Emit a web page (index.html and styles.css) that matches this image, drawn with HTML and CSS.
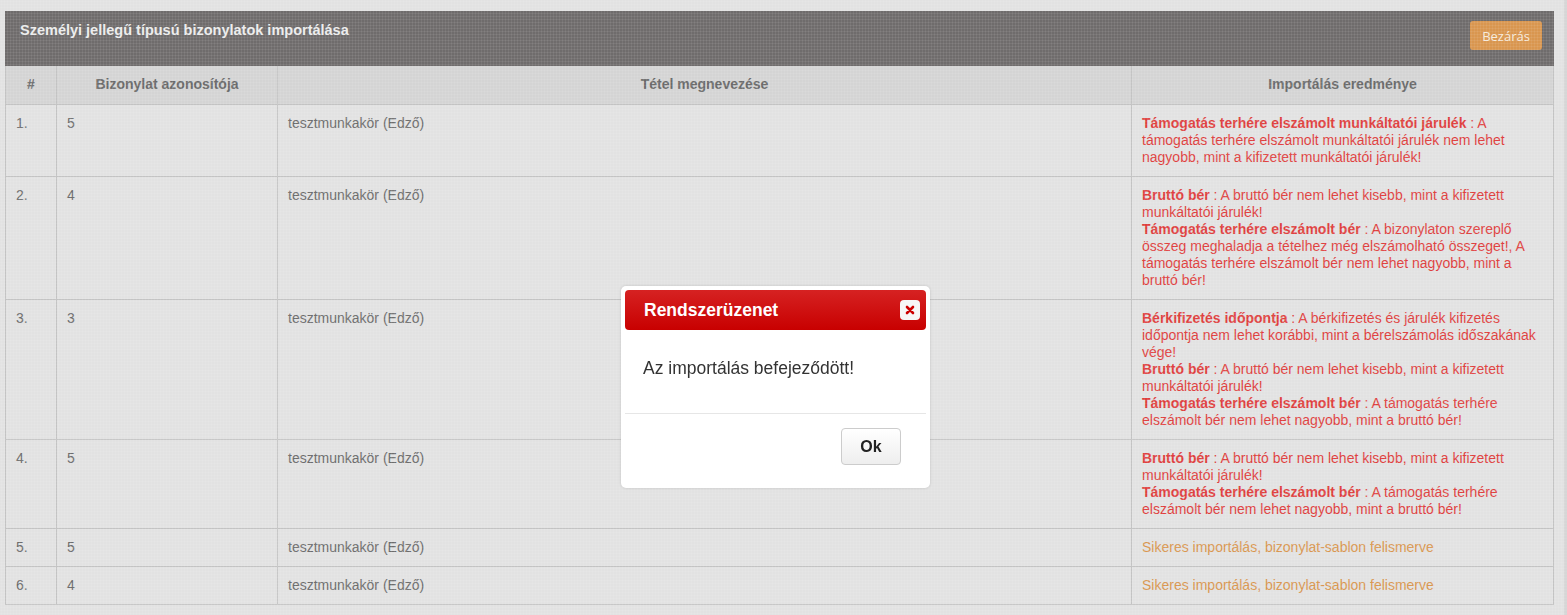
FILE: index.html
```html
<!DOCTYPE html>
<html>
<head>
    <meta charset="utf-8">
    <title>Személyi jellegű típusú bizonylatok importálása</title>
    <link rel="stylesheet" href="styles.css">
</head>
<body>
    <div class="page">
        <div class="content">
            <div class="panel">
                <div class="panel-heading">
                    <span class="panel-title">Személyi jellegű típusú bizonylatok importálása</span>
                    <button class="btn-close">Bezárás</button>
                </div>
                <table class="result-table">
                    <thead>
                        <tr>
                            <th class="col-num">#</th>
                            <th class="col-id">Bizonylat azonosítója</th>
                            <th class="col-name">Tétel megnevezése</th>
                            <th class="col-result">Importálás eredménye</th>
                        </tr>
                    </thead>
                    <tbody>
                        <tr>
                            <td>1.</td>
                            <td>5</td>
                            <td>tesztmunkakör (Edző)</td>
                            <td class="error"><b>Támogatás terhére elszámolt munkáltatói járulék</b> : A támogatás terhére elszámolt munkáltatói járulék nem lehet nagyobb, mint a kifizetett munkáltatói járulék!</td>
                        </tr>
                        <tr>
                            <td>2.</td>
                            <td>4</td>
                            <td>tesztmunkakör (Edző)</td>
                            <td class="error"><b>Bruttó bér</b> : A bruttó bér nem lehet kisebb, mint a kifizetett munkáltatói járulék!<br><b>Támogatás terhére elszámolt bér</b> : A bizonylaton szereplő összeg meghaladja a tételhez még elszámolható összeget!, A támogatás terhére elszámolt bér nem lehet nagyobb, mint a bruttó bér!</td>
                        </tr>
                        <tr>
                            <td>3.</td>
                            <td>3</td>
                            <td>tesztmunkakör (Edző)</td>
                            <td class="error"><b>Bérkifizetés időpontja</b> : A bérkifizetés és járulék kifizetés időpontja nem lehet korábbi, mint a bérelszámolás időszakának vége!<br><b>Bruttó bér</b> : A bruttó bér nem lehet kisebb, mint a kifizetett munkáltatói járulék!<br><b>Támogatás terhére elszámolt bér</b> : A támogatás terhére elszámolt bér nem lehet nagyobb, mint a bruttó bér!</td>
                        </tr>
                        <tr>
                            <td>4.</td>
                            <td>5</td>
                            <td>tesztmunkakör (Edző)</td>
                            <td class="error"><b>Bruttó bér</b> : A bruttó bér nem lehet kisebb, mint a kifizetett munkáltatói járulék!<br><b>Támogatás terhére elszámolt bér</b> : A támogatás terhére elszámolt bér nem lehet nagyobb, mint a bruttó bér!</td>
                        </tr>
                        <tr>
                            <td>5.</td>
                            <td>5</td>
                            <td>tesztmunkakör (Edző)</td>
                            <td class="success">Sikeres importálás, bizonylat-sablon felismerve</td>
                        </tr>
                        <tr>
                            <td>6.</td>
                            <td>4</td>
                            <td>tesztmunkakör (Edző)</td>
                            <td class="success">Sikeres importálás, bizonylat-sablon felismerve</td>
                        </tr>
                    </tbody>
                </table>
            </div>
        </div>
        <div class="scroll-strip"></div>
    </div>

    <!-- Modal backdrop and system message -->
    <div class="backdrop"></div>
    <div class="modal">
        <div class="modal-header">
            <span class="modal-title">Rendszerüzenet</span>
            <button class="modal-x" aria-label="Bezár">
                <svg width="10" height="10" viewBox="0 0 10 10">
                    <path d="M2 2 L8 8 M8 2 L2 8" stroke="#cc0000" stroke-width="2.6" stroke-linecap="round"/>
                </svg>
            </button>
        </div>
        <div class="modal-body">Az importálás befejeződött!</div>
        <div class="modal-footer">
            <button class="btn-ok">Ok</button>
        </div>
    </div>
</body>
</html>
```

FILE: styles.css
```css
html, body {
    margin: 0;
    height: 100%;
}

body {
    background-color: #e2e2e2;
    font-family: 'Liberation Sans', Arial, sans-serif;
    font-size: 14px;
    overflow: hidden;
}

.page {
    display: flex;
    min-height: 100%;
}

.content {
    flex: 1;
    padding: 11px 10px 0 5px;
}

.scroll-strip {
    width: 5px;
    background-color: #d6d6d6;
}

.panel {
    background-color: #e2e2e2;
}

.panel-heading {
    display: flex;
    justify-content: space-between;
    align-items: flex-start;
    background-color: #6f6c6c;
    padding: 10px 12px 16px 15px;
    height: 29px;
}

.panel-title {
    color: #ececec;
    font-weight: bold;
    font-size: 14.5px;
    line-height: 19px;
}

.btn-close {
    width: 72px;
    height: 29px;
    background-color: #d9964f;
    color: #f6eadc;
    border: none;
    border-radius: 3px;
    font-family: 'Open Sans', sans-serif;
    font-size: 13px;
    cursor: pointer;
}

.result-table {
    width: 100%;
    border-collapse: collapse;
    table-layout: fixed;
}

.result-table th,
.result-table td {
    border: 1px solid #c3c3c3;
    padding: 10px 10px;
    line-height: 17px;
    vertical-align: top;
    text-align: left;
}

.result-table th {
    background-color: #d4d4d4;
    color: #6a6a6a;
    font-size: 14px;
    text-align: center;
    padding-bottom: 11px;
    border-top: none;
}

.result-table td {
    background-color: #e2e2e2;
    color: #6c6c6c;
}

.col-num { width: 30px; }
.col-id { width: 200px; }
.col-name { width: 833px; }
.col-result { width: 401px; }

.result-table td.error {
    color: #df3f3e;
}

.result-table td.success {
    color: #d9964f;
}

/* dotted dim layer over the page */
.backdrop {
    position: fixed;
    inset: 0;
    background-image: radial-gradient(rgba(255, 255, 255, 0.14) 0.8px, transparent 1.2px);
    background-size: 3px 3px;
}

.modal {
    position: fixed;
    top: 286px;
    left: 621px;
    width: 301px;
    padding: 4px;
    background-color: #ffffff;
    border-radius: 5px;
    box-shadow: 0 0 3px rgba(0, 0, 0, 0.15);
}

.modal-header {
    display: flex;
    align-items: center;
    justify-content: space-between;
    height: 40px;
    padding: 0 6px 0 19px;
    background-image: linear-gradient(#d62222, #c80000);
    border-radius: 4px;
}

.modal-title {
    color: #ffffff;
    font-weight: bold;
    font-size: 17.5px;
}

.modal-x {
    display: flex;
    align-items: center;
    justify-content: center;
    width: 20px;
    height: 20px;
    padding: 0;
    border: none;
    border-radius: 4px;
    background-color: #f7f7f7;
    cursor: pointer;
}

.modal-body {
    padding: 26px 18px 33px;
    font-size: 17.5px;
    line-height: 24px;
    color: #333333;
    border-bottom: 1px solid #e6e6e6;
}

.modal-footer {
    display: flex;
    justify-content: flex-end;
    padding: 14px 25px 19px;
}

.btn-ok {
    width: 60px;
    height: 37px;
    background-image: linear-gradient(#ffffff, #eeeeee);
    border: 1px solid #cccccc;
    border-radius: 4px;
    font-family: 'Liberation Sans', Arial, sans-serif;
    font-weight: bold;
    font-size: 16px;
    color: #222222;
    cursor: pointer;
}
```
